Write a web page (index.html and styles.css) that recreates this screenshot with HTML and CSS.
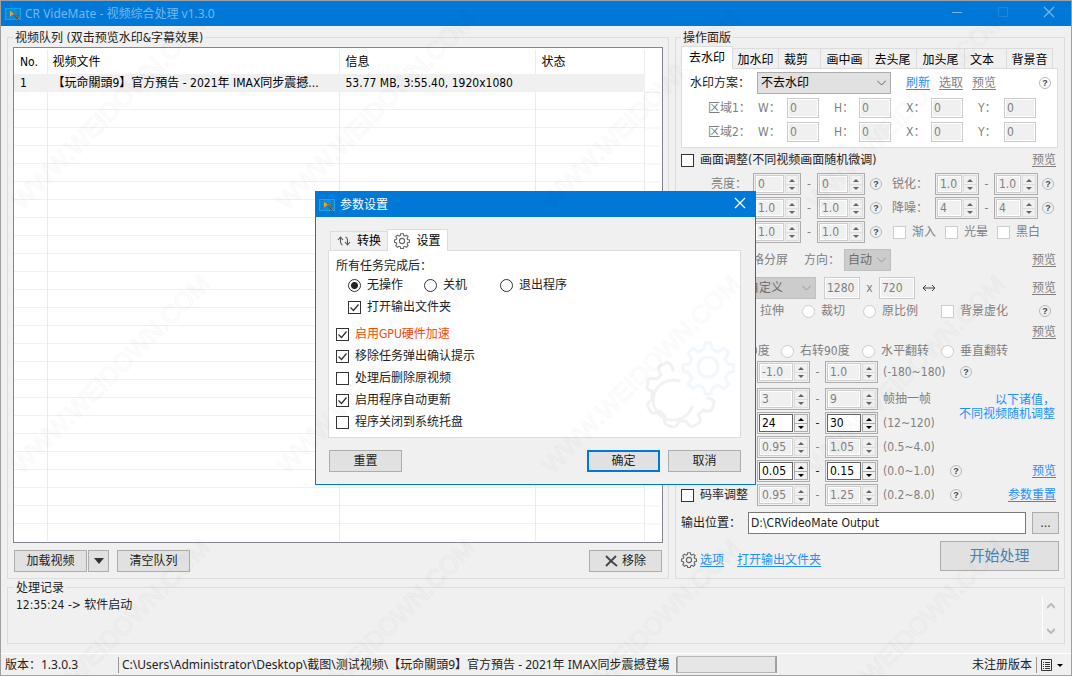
FILE: index.html
```html
<!DOCTYPE html>
<html lang="zh-CN">
<head>
<meta charset="utf-8">
<title>CR VideMate</title>
<link rel="stylesheet" href="styles.css">
</head>
<body>
<svg class="defs" aria-hidden="true">
  <symbol id="app" viewBox="0 0 16 12"><rect x=".5" y=".5" width="15" height="11" fill="#128bd2" stroke="#10a5e8"/><path d="M3 1v10M13 1v10" stroke="#0b62a8" stroke-dasharray="1 1"/><path d="M5 3l4 2.500-4 3z" fill="#e8a33a"/><path d="M8 4l5 4 1 4-3-2z" fill="#4d3b38"/><path d="M9 5l5 6" stroke="#d9862c"/></symbol>
  <symbol id="gear" viewBox="0 0 16 16"><path d="M6.700.7h2.600l.4 1.900 1.200.5 1.600-1 1.600 1.600-1 1.700.5 1.100 1.900.4v2.400l-1.900.5-.5 1.200 1 1.600-1.600 1.700-1.600-1-1.200.5-.4 1.800H6.700l-.4-1.800-1.200-.5-1.600 1-1.700-1.700 1-1.600-.5-1.200-1.800-.5V6.900l1.800-.4.5-1.100-1-1.700 1.700-1.600 1.600 1 1.200-.5z" fill="none" stroke="#666" stroke-width="1.100"/><circle cx="8" cy="8" r="2.600" fill="none" stroke="#666" stroke-width="1.100"/></symbol>
  <symbol id="close" viewBox="0 0 12 12"><path d="M1 1l10 10M11 1L1 11" stroke="currentColor" stroke-width="1.200"/></symbol>
</svg>

<div class="window">
  <header class="titlebar">
    <svg class="app-icon"><use href="#app"/></svg>
    <span class="grow">CR VideMate - 视频综合处理 v1.3.0</span>
    <button class="sys" aria-label="最小化"><svg viewBox="0 0 12 12"><path d="M1 6.500h10" stroke="currentColor"/></svg></button>
    <button class="sys dim" aria-label="最大化"><svg viewBox="0 0 12 12"><path d="M1.500 1.500h9v9h-9z" fill="none" stroke="currentColor"/></svg></button>
    <button class="sys" aria-label="关闭"><svg><use href="#close"/></svg></button>
  </header>

  <main class="main">
    <fieldset class="group queue">
      <legend>视频队列 (双击预览水印&amp;字幕效果)</legend>
      <div class="list">
        <table>
          <colgroup><col class="c-no"><col class="c-file"><col class="c-info"><col class="c-state"><col></colgroup>
          <thead><tr><th>No.</th><th>视频文件</th><th>信息</th><th>状态</th><th class="last"></th></tr></thead>
          <tbody>
            <tr class="sel"><td>1</td><td>【玩命關頭9】官方預告 - 2021年 IMAX同步震撼...</td><td>53.77 MB, 3:55.40, 1920x1080</td><td></td><td class="last"></td></tr>
            <tr class="fill"><td></td><td></td><td></td><td></td><td class="last"></td></tr>
          </tbody>
        </table>
      </div>
      <div class="queue-buttons">
        <button class="btn">加载视频</button>
        <button class="btn drop" aria-label="更多"><svg viewBox="0 0 10 6"><path d="M0 0h10L5 6z" fill="#333"/></svg></button>
        <button class="btn clear">清空队列</button>
        <button class="btn remove"><svg viewBox="0 0 13 12"><path d="M1 1l5 5 6 5M11 1L6 6l-5 5" fill="none" stroke="#444" stroke-width="1.800"/></svg>移除</button>
      </div>
    </fieldset>

    <fieldset class="group panel">
      <legend>操作面版</legend>
      <div class="tabs" role="tablist">
        <button class="tab on" role="tab">去水印</button><button class="tab t2" role="tab">加水印</button><button class="tab t3" role="tab">裁剪</button><button class="tab t4" role="tab">画中画</button><button class="tab t4" role="tab">去头尾</button><button class="tab t4" role="tab">加头尾</button><button class="tab t3" role="tab">文本</button><button class="tab t2" role="tab">背景音</button>
      </div>
      <section class="page">
        <div class="plan">
          <label for="plan">水印方案：</label>
          <select id="plan"><option>不去水印</option></select>
          <span></span>
          <a href="#">刷新</a><a href="#" class="mute">选取</a><a href="#" class="mute">预览</a>
          <button class="help">?</button>
        </div>
        <div class="area">
          <span>区域1：</span><label for="w1">W：</label><input id="w1" value="0" disabled><label for="h1">H：</label><input id="h1" value="0" disabled><label for="x1">X：</label><input id="x1" value="0" disabled><label for="y1">Y：</label><input id="y1" value="0" disabled>
        </div>
        <div class="area">
          <span>区域2：</span><label for="w2">W：</label><input id="w2" value="0" disabled><label for="h2">H：</label><input id="h2" value="0" disabled><label for="x2">X：</label><input id="x2" value="0" disabled><label for="y2">Y：</label><input id="y2" value="0" disabled>
        </div>
      </section>

      <div class="row between">
        <label class="opt"><input type="checkbox">画面调整(不同视频画面随机微调)</label>
        <a href="#" class="mute">预览</a>
      </div>
      <div class="row adjust">
        <span class="name">亮度：</span><span class="spin"><input value="0" aria-label="亮度最小" disabled></span><i>-</i><span class="spin"><input value="0" aria-label="亮度最大" disabled></span><button class="help">?</button>
        <span class="name2">锐化：</span><span class="spin"><input value="1.0" aria-label="锐化最小" disabled></span><i>-</i><span class="spin"><input value="1.0" aria-label="锐化最大" disabled></span><button class="help">?</button>
      </div>
      <div class="row adjust">
        <span class="name"></span><span class="spin"><input value="1.0" aria-label="最小" disabled></span><i>-</i><span class="spin"><input value="1.0" aria-label="最大" disabled></span><button class="help">?</button>
        <span class="name2">降噪：</span><span class="spin"><input value="4" aria-label="降噪最小" disabled></span><i>-</i><span class="spin"><input value="4" aria-label="降噪最大" disabled></span><button class="help">?</button>
      </div>
      <div class="row adjust">
        <span class="name"></span><span class="spin"><input value="1.0" aria-label="最小" disabled></span><i>-</i><span class="spin"><input value="1.0" aria-label="最大" disabled></span><button class="help">?</button>
        <div class="effects">
          <label class="opt off"><input type="checkbox" disabled>渐入</label>
          <label class="opt off"><input type="checkbox" disabled>光晕</label>
          <label class="opt off"><input type="checkbox" disabled>黑白</label>
        </div>
      </div>
      <div class="row tall split">
        <span>格分屏</span><label for="dir">方向：</label>
        <select id="dir" disabled><option>自动</option></select>
        <a href="#" class="mute end">预览</a>
      </div>
      <div class="row size">
        <select aria-label="尺寸" disabled><option>自定义</option></select>
        <span></span>
        <input class="lite" value="1280" aria-label="宽" disabled><i>x</i><input class="lite" value="720" aria-label="高" disabled>
        <svg class="swap" viewBox="0 0 14 8"><path d="M1 4h12M4 1L1 4l3 3M10 1l3 3-3 3" fill="none" stroke="#444"/></svg>
        <a href="#" class="mute end">预览</a>
      </div>
      <div class="row short modes">
        <span>拉伸</span>
        <label class="opt off"><input type="radio" name="fit" disabled>裁切</label>
        <label class="opt off"><input type="radio" name="fit" disabled>原比例</label>
        <label class="opt off"><input type="checkbox" disabled>背景虚化</label>
        <button class="help">?</button>
      </div>
      <div class="row short2 between"><span></span><a href="#" class="mute">预览</a></div>
      <div class="row short3 turns">
        <span>90度</span>
        <label class="opt off"><input type="radio" name="turn" disabled>右转90度</label>
        <label class="opt off"><input type="radio" name="turn" disabled>水平翻转</label>
        <label class="opt off"><input type="radio" name="turn" disabled>垂直翻转</label>
      </div>
      <div class="row range">
        <span></span><span class="spin"><input value="-1.0" aria-label="角度最小" disabled></span><i>-</i><span class="spin"><input value="1.0" aria-label="角度最大" disabled></span><span class="hint">(-180~180)</span><button class="help">?</button>
      </div>
      <div class="row range first">
        <span></span><span class="spin"><input value="3" aria-label="抽帧最小" disabled></span><i>-</i><span class="spin"><input value="9" aria-label="抽帧最大" disabled></span><span class="hint">帧抽一帧</span>
        <p class="note">以下诸值，<br>不同视频随机调整</p>
      </div>
      <div class="row range">
        <span></span><span class="spin live"><input value="24" aria-label="帧率最小"></span><i>-</i><span class="spin live"><input value="30" aria-label="帧率最大"></span><span class="hint">(12~120)</span>
      </div>
      <div class="row range">
        <span></span><span class="spin"><input value="0.95" aria-label="速度最小" disabled></span><i>-</i><span class="spin"><input value="1.05" aria-label="速度最大" disabled></span><span class="hint">(0.5~4.0)</span>
      </div>
      <div class="row range near">
        <span></span><span class="spin live"><input value="0.05" aria-label="最小"></span><i>-</i><span class="spin live"><input value="0.15" aria-label="最大"></span><span class="hint">(0.0~1.0)</span><button class="help">?</button><a href="#" class="end">预览</a>
      </div>
      <div class="row range near">
        <label class="opt"><input type="checkbox">码率调整</label><span class="spin"><input value="0.95" aria-label="码率最小" disabled></span><i>-</i><span class="spin"><input value="1.25" aria-label="码率最大" disabled></span><span class="hint">(0.2~8.0)</span><button class="help">?</button><a href="#" class="end">参数重置</a>
      </div>
      <div class="row tall output">
        <label for="out">输出位置：</label>
        <input id="out" value="D:\CRVideoMate Output">
        <button class="btn browse">...</button>
      </div>
      <div class="actions">
        <svg class="gear"><use href="#gear"/></svg>
        <a href="#">选项</a><a href="#" class="folder">打开输出文件夹</a>
        <button class="btn start">开始处理</button>
      </div>
    </fieldset>
  </main>

  <fieldset class="group log">
    <legend>处理记录</legend>
    <p>12:35:24 -&gt; 软件启动</p>
    <div class="scroll">
      <svg viewBox="0 0 8 6"><path d="M0 5l4-4 4 4" fill="none" stroke="#bbb" stroke-width="2"/></svg>
      <svg viewBox="0 0 8 6"><path d="M0 1l4 4 4-4" fill="none" stroke="#bbb" stroke-width="2"/></svg>
    </div>
  </fieldset>

  <footer class="status">
    <span class="version">版本：1.3.0.3</span>
    <span class="path">C:\Users\Administrator\Desktop\截图\测试视频\【玩命關頭9】官方預告 - 2021年 IMAX同步震撼登場</span>
    <span class="progress"></span>
    <span class="reg">未注册版本</span>
    <button class="menu" aria-label="菜单"><svg viewBox="0 0 22 12"><path d="M.5.5h10v11H.5z" fill="none" stroke="#333"/><path d="M2 3.500h1m1 0h5M2 5.500h1m1 0h5M2 7.500h1m1 0h5M2 9.500h1m1 0h5" stroke="#333"/><path d="M16 5h6l-3 3z"/></svg></button>
  </footer>

  <div class="dialog" role="dialog" aria-label="参数设置">
    <header class="dialog-title">
      <svg class="app-icon"><use href="#app"/></svg>
      <span class="grow">参数设置</span>
      <button class="sys" aria-label="关闭"><svg><use href="#close"/></svg></button>
    </header>
    <div class="dialog-body">
      <div class="dtabs" role="tablist">
        <button class="dtab" role="tab"><svg viewBox="0 0 14 10"><path d="M1 4l2.500-3L6 4M3.500 1v5q0 2 2 3M8.500 1q2 .5 2 3v5M8 6l2.500 3L13 6" fill="none" stroke="#555" stroke-width="1.100"/></svg>转换</button>
        <button class="dtab on" role="tab"><svg class="gear"><use href="#gear"/></svg>设置</button>
      </div>
      <section class="dpage">
        <p>所有任务完成后：</p>
        <div class="choices">
          <label class="opt"><input type="radio" name="after" checked>无操作</label>
          <label class="opt"><input type="radio" name="after">关机</label>
          <label class="opt"><input type="radio" name="after">退出程序</label>
        </div>
        <label class="opt open"><input type="checkbox" checked>打开输出文件夹</label>
        <label class="opt hot"><input type="checkbox" checked>启用GPU硬件加速</label>
        <label class="opt"><input type="checkbox" checked>移除任务弹出确认提示</label>
        <label class="opt"><input type="checkbox">处理后删除原视频</label>
        <label class="opt"><input type="checkbox" checked>启用程序自动更新</label>
        <label class="opt"><input type="checkbox">程序关闭到系统托盘</label>
        <svg class="art" viewBox="0 0 90 92" aria-hidden="true">
          <g fill="none" stroke-width="3" stroke-linecap="round" stroke-linejoin="round">
            <g stroke="#f1f7fc"><circle cx="63" cy="27" r="10"/><path d="M60 3h6l1 6 6 3 6-4 5 5-4 6 3 5 6 1v6l-6 2-3 5 4 6-5 5-6-4-6 3-1 6h-6l-1-6-6-3-5 4-5-5 4-6-3-5-6-2v-6l6-1 3-5-4-6 5-5 5 4 6-3z"/></g>
            <path stroke="#f1f1f1" d="M34 41a20 20 0 1 0 13 26M28 30q-2-9-7-7l-6 3q-3 2 1 9l-4 4q-8-2-9 2l-1 6q0 3 5 4v9q-6 3-4 7l3 5q2 3 8-1l6 5q-2 7 2 9l6 2q4 0 6-6h7q4 7 8 5l5-3q3-2-1-8l5-5q8 3 9-1l2-6q1-3-6-5"/>
          </g>
        </svg>
      </section>
      <div class="dbuttons">
        <button class="btn">重置</button>
        <button class="btn primary">确定</button>
        <button class="btn">取消</button>
      </div>
    </div>
  </div>

  <svg class="watermark" aria-hidden="true">
    <defs><pattern id="wm" width="265" height="264" patternUnits="userSpaceOnUse" patternTransform="translate(10 214)"><text transform="translate(11 260) rotate(-45)">WWW.WEIDOWN.COM</text></pattern></defs>
    <rect width="100%" height="100%" fill="url(#wm)"/>
  </svg>
</div>
<script src="app.js"></script>
</body>
</html>
```

FILE: styles.css
```css
* { box-sizing: border-box; }
body {
  margin: 0;
  background: #f0f0f0;
  color: #222;
  font: 12px/16px "DejaVu Sans Condensed", "Noto Sans CJK SC", sans-serif;
}
button, input, select { font: inherit; color: inherit; margin: 0; }
button { padding: 0; border: 0; background: none; }
p { margin: 0; }
i { font-style: normal; text-align: center; }
a { color: #1e90ff; text-decoration: underline; text-underline-offset: 2px; }
a.mute { color: #808080; }
.defs { position: absolute; width: 0; height: 0; }
.grow { flex: 1; }

.window {
  position: relative;
  display: flex;
  flex-direction: column;
  min-height: 100vh;
  border: 1px solid #a0a0a0;
  overflow: hidden;
}
.titlebar, .dialog-title {
  display: flex;
  align-items: center;
  background: #0078d7;
  font-family: "Noto Sans", "Noto Sans CJK SC", sans-serif;
}
.titlebar { height: 25px; padding: 0 1px 0 4px; gap: 4px; color: #76b7ec; }
.app-icon { width: 16px; height: 12px; }
.sys { width: 42px; height: 24px; color: inherit; }
.sys svg { width: 12px; height: 12px; }
.dim { opacity: .25; }

.main {
  flex: 1;
  display: grid;
  grid-template-columns: 1fr 390px;
  gap: 6px;
  padding: 2px 6px 0 6px;
}
.group {
  min-width: 0;
  margin: 0;
  padding: 0 5px 6px;
  border: 1px solid #dcdcdc;
}
.group legend { padding: 2px 2px 0; line-height: 16px; }
.queue { display: flex; flex-direction: column; }

.list {
  flex: 1;
  display: flex;
  margin-top: 1px;
  border: 1px solid #828790;
  background: #fff;
  padding: 2px 1px 1px 0;
  color: #000;
}
table { width: 100%; height: 100%; table-layout: fixed; border-collapse: collapse; }
.c-no { width: 33px; }
.c-file { width: 292px; }
.c-info { width: 196px; }
.c-state { width: 109px; }
th, td { padding: 0 0 0 6px; text-align: left; font-weight: normal; white-space: nowrap; border-right: 1px solid #ebebeb; }
td:nth-child(2), th:nth-child(2) { padding-left: 5px; }
th.last, td.last { border-right: 0; }
th { height: 24px; }
.sel td { height: 18px; border-color: #f0f0f0; background: #f0f0f0; }
.sel td.last { background: #fff; border-bottom: 1px solid #f0f0f0; }
.fill td { height: 100%; background: repeating-linear-gradient(#fff 0 17px, #f0f0f0 17px 18px); }

.btn {
  height: 22px;
  min-width: 73px;
  border: 1px solid #adadad;
  background: #e1e1e1;
  text-align: center;
  line-height: 20px;
}
.queue-buttons { display: flex; gap: 1px; padding: 7px 1px 0; }
.drop { min-width: 21px; width: 21px; }
.drop svg { width: 10px; height: 6px; vertical-align: 1px; }
.clear { margin-left: 7px; }
.remove { margin-left: auto; }
.remove svg { width: 13px; height: 12px; margin-right: 4px; vertical-align: -2px; }

.panel { color: #808080; }
.panel legend, .panel .opt, .output { color: #222; }
.tabs { display: flex; align-items: flex-end; color: #000; }
.tab { height: 20px; border: 1px solid #dcdcdc; border-left: 0; border-bottom: 0; padding-top: 2px; }
.tab.on { width: 52px; height: 23px; margin-bottom: -1px; border-left: 1px solid #dcdcdc; background: #fff; z-index: 1; padding: 0 0 1px; }
.t2 { width: 46px; }
.tab.t3 { width: 42px; text-align: left; padding-left: 5px; }
.t4 { width: 48px; }
.page { border: 1px solid #dcdcdc; background: #fff; height: 80px; margin-right: 1px; }
.plan, .area, .row { display: grid; align-items: center; }
.plan { height: 27px; grid-template-columns: 67px 134px 15px 33px 33px 57px 32px; padding-left: 8px; color: #222; }
.area { height: 24px; grid-template-columns: 50px 29px 32px 40px 32px 40px 32px 41px 32px; padding-left: 26px; }
.area input ~ label { padding-left: 15px; }
.area input, .lite {
  width: 100%;
  height: 20px;
  padding: 0 2px;
  border: 1px solid #ccc;
  background: #f0f0f0;
  box-shadow: inset 0 0 0 1px #fff;
  color: #808080;
}
.help {
  justify-self: center;
  width: 12px;
  height: 12px;
  border: 1px solid #b8b8b8;
  border-radius: 50%;
  color: #444;
  font: bold 9px/10px "Liberation Sans", sans-serif;
}

select {
  appearance: none;
  height: 22px;
  padding: 0 3px;
  border: 1px solid #adadad;
  border-radius: 0;
  color: #000;
  background: #e1e1e1 url("data:image/svg+xml,%3Csvg xmlns='http://www.w3.org/2000/svg' width='9' height='6'%3E%3Cpath d='M0 .5l4.500 4.500L9 .5' fill='none' stroke='%23666'/%3E%3C/svg%3E") right 4px center no-repeat;
}
select:disabled {
  border-color: #bfbfbf;
  background-color: #ccc;
  background-image: url("data:image/svg+xml,%3Csvg xmlns='http://www.w3.org/2000/svg' width='9' height='6'%3E%3Cpath d='M0 .5l4.500 4.500L9 .5' fill='none' stroke='%23999'/%3E%3C/svg%3E");
  color: #6d6d6d;
  opacity: 1;
}

.opt { display: flex; align-items: center; gap: 6px; white-space: nowrap; }
.opt input {
  appearance: none;
  flex: none;
  width: 13px;
  height: 13px;
  border: 1px solid #333;
  background: #fff;
}
.opt input[type=radio] { border-radius: 50%; }
.opt input[type=radio]:checked { background: radial-gradient(circle, #222 0 3px, #fff 4px); }
.opt input[type=checkbox]:checked {
  background: #fff url("data:image/svg+xml,%3Csvg xmlns='http://www.w3.org/2000/svg' width='11' height='11'%3E%3Cpath d='M1.500 5.500l3 3 5-6' fill='none' stroke='%23333' stroke-width='1.300'/%3E%3C/svg%3E") center no-repeat;
}
.opt input:disabled { border-color: #ccc; }
.panel .off { color: #808080; }

.row { height: 24px; }
.row.tall { height: 32px; }
.row.short { height: 22px; }
.row.short2 { height: 20px; }
.row.short3 { height: 18px; }
.between { grid-template-columns: 1fr auto; padding-right: 3px; }
.end { justify-self: end; padding-right: 3px; grid-column-end: -1; }
.adjust { grid-template-columns: 72px 48px 16px 48px 22px 48px 44px 15px 44px 20px; }
.name { padding-left: 30px; white-space: nowrap; }
.name2 { padding-left: 5px; white-space: nowrap; }
.effects { grid-column: 6 / -1; display: flex; gap: 9px; padding-left: 6px; }

.spin {
  display: grid;
  grid-template-columns: 1fr 14px;
  gap: 1px;
  height: 22px;
  padding: 1px;
  border: 1px solid #adadad;
}
.spin input {
  width: 100%;
  min-width: 0;
  height: 18px;
  padding: 0 2px;
  border: 1px solid #ccc;
  background: #f0f0f0;
  box-shadow: inset 0 0 0 1px #fff;
  color: #808080;
}
.steps { display: grid; grid-template-rows: 1fr 1fr; border: 1px solid #dcdcdc; }
.steps button { display: grid; place-items: center; }
.steps button + button { border-top: 1px solid #dcdcdc; }
.steps button::before { content: ""; border: 3px solid transparent; border-top-width: 0; border-bottom-color: #666; }
.steps button + button::before { border-width: 3px 3px 0; border-top-color: #666; }
.live + i { color: #222; }
.live input { border-color: #666; background: #fff; color: #000; }
.live .steps, .live .steps button + button { border-color: #adadad; }
.live .steps button::before { border-bottom-color: #000; }
.live .steps button + button::before { border-top-color: #000; }

.split { grid-template-columns: 52px 40px 47px 1fr; padding-left: 71px; }
.size { grid-template-columns: 80px 8px 36px 19px 36px 21px 1fr; padding-left: 55px; }
.size select { padding-left: 10px; }
.lite { height: 22px; }
.swap { width: 14px; height: 8px; justify-self: end; }
.modes, .turns { grid-template-columns: 42px 61px 78px 93px 1fr; padding-left: 79px; }
.modes .help { justify-self: start; margin-left: 5px; }
.turns { grid-template-columns: 37px 81px 79px 1fr; padding-left: 63px; }
.range { grid-template-columns: 76px 53px 15px 53px 5px 72px 22px 1fr; }
.near { grid-template-columns: 76px 53px 15px 53px 5px 62px 22px 1fr; }
.range .hint { grid-column: 6; white-space: nowrap; }
.range .help { grid-column: 7; }
.range .end { grid-column: 8; }
.first { margin-top: 3px; }
.note { grid-column: 7 / -1; justify-self: end; height: 0; margin: 0 4px 12px 0; line-height: 14px; text-align: right; color: #1e90ff; white-space: nowrap; }
.output { grid-template-columns: 67px 1fr 27px; }
.output input { height: 22px; margin-right: 6px; padding: 0 2px; border: 1px solid #7a7a7a; background: #fff; }
.browse { min-width: 27px; }
.actions { display: flex; align-items: center; padding-top: 2px; }
.gear { width: 16px; height: 16px; }
.actions > .gear { margin-top: 8px; margin-right: 3px; }
.actions a { margin-top: 8px; }
.folder { margin-left: 13px; }
.start { margin-left: auto; width: 119px; height: 30px; font-size: 15px; line-height: 26px; color: #4682b4; }

.log { position: relative; display: flex; margin: -1px 6px 0 6px; height: 66px; padding: 0 8px; }
.log legend { margin-left: -2px; }
.log p { flex: 1; padding-top: 1px; }
.scroll { display: flex; flex-direction: column; justify-content: space-between; width: 14px; height: 43px; padding: 7px 0 5px 4px; border-left: 1px solid #fff; }
.scroll svg { width: 8px; height: 6px; }

.status {
  display: flex;
  align-items: center;
  height: 22px;
  margin-top: 9px;
  border-top: 1px solid #fff;
  font-family: "Noto Sans", "Noto Sans CJK SC", sans-serif;
}
.version { width: 117px; padding-left: 4px; }
.path { flex: 0 1 559px; padding-left: 3px; border: 1px solid #999; border-width: 0 1px; white-space: nowrap; overflow: hidden; }
.progress { width: 100px; height: 17px; border: 1px solid #b5b5b5; border-right: 2px solid #a0a0a0; background: #e6e6e6; }
.reg { margin-left: auto; padding-right: 4px; border-right: 1px solid #999; }
.menu { width: 34px; height: 18px; padding: 0 4px; text-align: left; }
.menu svg { display: block; width: 22px; height: 12px; }

.dialog {
  position: absolute;
  left: 314px;
  top: 190px;
  width: 441px;
  border: 1px solid #0078d7;
  background: #f0f0f0;
}
.dialog-title { height: 25px; padding-left: 3px; gap: 5px; color: #fff; }
.dialog-title .sys { width: 30px; }
.dialog-body { padding: 12px 14px 12px 12px; }
.dtabs { display: flex; align-items: flex-end; padding-left: 2px; }
.dtab { display: flex; align-items: center; justify-content: center; gap: 6px; width: 57px; height: 19px; border: 1px solid #dcdcdc; border-width: 1px 0 0 1px; color: #000; }
.dtab svg { width: 14px; height: 10px; }
.dtab.on { width: 61px; height: 22px; margin-bottom: -1px; border-right-width: 1px; background: #fff; z-index: 1; }
.dtab .gear { width: 16px; height: 16px; }
.dpage { position: relative; height: 188px; padding: 7px 7px 6px; border: 1px solid #dcdcdc; background: #fff; }
.dpage .opt { height: 22px; }
.choices { display: grid; grid-template-columns: 76px 76px 1fr; padding-left: 12px; }
.dpage .open { padding-left: 12px; margin-bottom: 5px; }
.dpage .hot { color: #ff4500; }
.art { position: absolute; right: 5px; bottom: 5px; width: 90px; height: 92px; }
.dbuttons { display: flex; gap: 8px; padding: 12px 0 0 1px; }
.primary { margin-left: auto; border: 2px solid #0078d7; line-height: 18px; }

.watermark { position: absolute; inset: 0; width: 100%; height: 100%; pointer-events: none; }
.watermark text { font: 25px "Liberation Sans", sans-serif; fill: none; stroke: #000; stroke-opacity: .03; stroke-width: 1px; }
```

FILE: app.js
```js
// Adds the up/down stepper to every numeric field.
document.querySelectorAll(".spin").forEach((spin) => {
  const steps = document.createElement("span");
  steps.className = "steps";
  for (const name of ["增加", "减少"]) {
    const button = document.createElement("button");
    button.setAttribute("aria-label", name);
    button.disabled = spin.querySelector("input").disabled;
    steps.append(button);
  }
  spin.append(steps);
});
```
